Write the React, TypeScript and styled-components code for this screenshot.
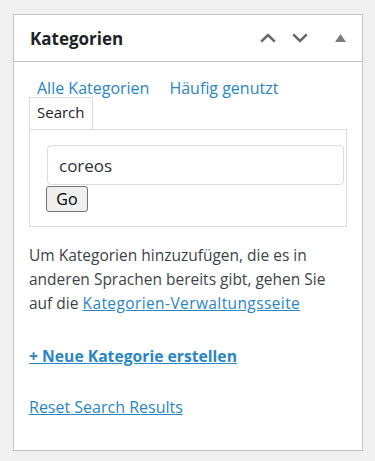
import styled, { createGlobalStyle } from 'styled-components';

const GlobalStyle = createGlobalStyle`
  html, body {
    margin: 0;
    padding: 0;
    background: #f0f0f1;
  }
  body {
    font-family: 'Open Sans', 'Noto Sans', sans-serif;
    color: #3c434a;
  }
`;

const Page = styled.div`
  padding: 14px 12px 8px 13px;
`;

const Postbox = styled.div`
  background: #fff;
  border: 1px solid #c3c4c7;
  height: 437px;
  box-sizing: border-box;
`;

const Header = styled.div`
  display: flex;
  align-items: center;
  height: 46px;
  padding: 0 16px;
  border-bottom: 1px solid #c3c4c7;
`;

const Title = styled.h2`
  flex: 1;
  margin: 0;
  font-size: 17px;
  font-weight: 700;
  color: #1d2327;
`;

const HandleActions = styled.div`
  display: flex;
  align-items: center;
`;

const IconButton = styled.button<{ $gap?: number }>`
  display: flex;
  align-items: center;
  justify-content: center;
  margin-left: ${(p) => p.$gap ?? 0}px;
  height: 20px;
  padding: 0;
  border: 0;
  background: none;
`;

const Inside = styled.div`
  padding: 14px 15px 0 15px;
`;

const TabLinks = styled.div`
  display: flex;
  gap: 20px;
  padding-left: 8px;
  line-height: 24px;
  font-size: 16px;
`;

const TabLink = styled.a`
  color: #2a86c2;
  text-decoration: none;
`;

const ActiveTab = styled.div`
  display: inline-block;
  margin-top: -3px;
  height: 31px;
  line-height: 29px;
  padding: 0 7px;
  border: 1px solid #dcdcde;
  border-bottom: 0;
  font-size: 15px;
  color: #1d2327;
`;

const TabPanel = styled.div`
  border: 1px solid #dcdcde;
  height: 98px;
  box-sizing: border-box;
  padding: 15px 4px 0 16px;
`;

const SearchInput = styled.input`
  display: block;
  box-sizing: border-box;
  width: 297px;
  height: 40px;
  margin: 0 0 0 1px;
  padding: 0 11px;
  border: 1px solid #dcdcde;
  border-radius: 4px;
  font-family: inherit;
  font-size: 17px;
  color: #2c3338;
  outline: none;
`;

const GoButton = styled.button`
  display: block;
  box-sizing: border-box;
  width: 42px;
  height: 26px;
  margin-top: 1px;
  padding: 0;
  border: 1px solid #767676;
  border-radius: 3px;
  background: #efefef;
  font-family: inherit;
  font-size: 16px;
  color: #000;
`;

const Note = styled.p`
  margin: 16px 0 0;
  padding-right: 14px;
  font-size: 15.5px;
  line-height: 24px;
  color: #3c434a;
`;

const InlineLink = styled.a`
  color: #2a86c2;
  letter-spacing: 0.4px;
  text-decoration: underline;
`;

const ActionLink = styled.a<{ $strong?: boolean }>`
  display: block;
  margin-top: ${(p) => (p.$strong ? 29 : 27)}px;
  font-size: ${(p) => (p.$strong ? 15.7 : 16)}px;
  line-height: 24px;
  font-weight: ${(p) => (p.$strong ? 700 : 400)};
  color: #2a86c2;
  text-decoration: underline;
`;

const Chevron = ({ up }: { up?: boolean }) => (
  <svg width="16" height="10" viewBox="0 0 16 10">
    <path
      d={up ? 'M1.2 8.6 L8 2 L14.8 8.6' : 'M1.2 1.4 L8 8 L14.8 1.4'}
      fill="none"
      stroke="#646970"
      strokeWidth="2.6"
    />
  </svg>
);

export default function App() {
  return (
    <Page>
      <GlobalStyle />
      <Postbox>
        <Header>
          <Title>Kategorien</Title>
          <HandleActions>
            <IconButton aria-label="Nach oben verschieben">
              <Chevron up />
            </IconButton>
            <IconButton $gap={16} aria-label="Nach unten verschieben">
              <Chevron />
            </IconButton>
            <IconButton $gap={27} aria-label="Bedienfeld umschalten">
              <svg width="11" height="8" viewBox="0 0 11 8">
                <path d="M5.5 0 L11 8 L0 8 Z" fill="#787c82" />
              </svg>
            </IconButton>
          </HandleActions>
        </Header>
        <Inside>
          <TabLinks>
            <TabLink href="#">Alle Kategorien</TabLink>
            <TabLink href="#">Häufig genutzt</TabLink>
          </TabLinks>
          <ActiveTab>Search</ActiveTab>
          <TabPanel>
            <SearchInput defaultValue="coreos" />
            <GoButton>Go</GoButton>
          </TabPanel>
          <Note>
            Um Kategorien hinzuzufügen, die es in anderen Sprachen bereits gibt, gehen Sie auf die{' '}
            <InlineLink href="#">Kategorien-Verwaltungsseite</InlineLink>
          </Note>
          <ActionLink $strong href="#">
            + Neue Kategorie erstellen
          </ActionLink>
          <ActionLink href="#">Reset Search Results</ActionLink>
        </Inside>
      </Postbox>
    </Page>
  );
}
